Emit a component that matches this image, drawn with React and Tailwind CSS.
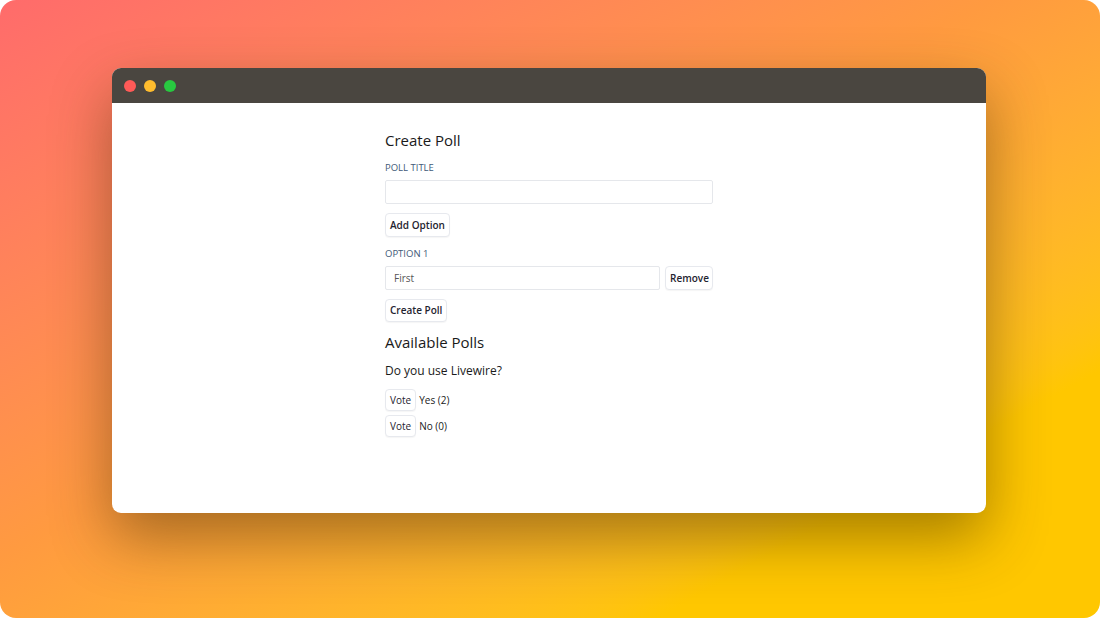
import { useState } from "react";

function Btn({ children, className = "", bold = true }) {
  return (
    <button
      className={`rounded-[4px] border border-[#e7e9ee] bg-white px-[4px] text-[10px] text-[#1f2430] shadow-[0_1px_1px_rgba(0,0,0,0.04)] ${
        bold ? "font-semibold" : "font-normal"
      } ${className}`}
    >
      {children}
    </button>
  );
}

export default function App() {
  const [title, setTitle] = useState("");
  const [option, setOption] = useState("First");

  return (
    <div className="h-[618px] w-[1100px] bg-white" style={{ fontFamily: '"Open Sans", "Noto Sans", sans-serif' }}>
      <div className="flex h-full w-full flex-col rounded-[16px] bg-gradient-to-br from-[#ff6b6b] via-[#ff9a40] via-45% to-[#ffc700] to-80% pl-[112px] pt-[68px]">
        <div className="flex h-[445px] w-[874px] flex-col overflow-hidden rounded-[9px] bg-white shadow-[0_25px_60px_rgba(60,40,0,0.45)]">
          <div className="flex h-[35px] items-center gap-[8px] bg-[#4a4640] pl-[12px]">
            <span className="h-[12px] w-[12px] rounded-full bg-[#ff5a57]" />
            <span className="h-[12px] w-[12px] rounded-full bg-[#ffbd2e]" />
            <span className="h-[12px] w-[12px] rounded-full bg-[#28c840]" />
          </div>
          <div className="flex flex-col pl-[273px] pt-[26px]">
            <div className="flex w-[328px] flex-col">
              <h2 className="text-[15px] leading-[22px] text-[#1a1a1a]">Create Poll</h2>
              <label className="mt-[11px] text-[9.5px] uppercase leading-[12px] text-[#3f5a78]">Poll Title</label>
              <input
                value={title}
                onChange={(e) => setTitle(e.target.value)}
                className="mt-[6px] h-[24px] w-full rounded-[2px] border border-[#e5e7eb] px-[8px] text-[10px] outline-none"
              />
              <div className="mt-[9px] flex">
                <Btn className="h-[24px]">Add Option</Btn>
              </div>
              <label className="mt-[11px] text-[9.5px] uppercase leading-[12px] text-[#3f5a78]">Option 1</label>
              <div className="mt-[6px] flex gap-[5px]">
                <input
                  value={option}
                  onChange={(e) => setOption(e.target.value)}
                  className="h-[24px] flex-1 rounded-[2px] border border-[#e5e7eb] px-[8px] text-[10px] text-[#555] outline-none"
                />
                <Btn className="h-[24px] w-[48px]">Remove</Btn>
              </div>
              <div className="mt-[9px] flex">
                <Btn className="h-[23px]">Create Poll</Btn>
              </div>
              <h2 className="mt-[9px] text-[15px] leading-[22px] text-[#1a1a1a]">Available Polls</h2>
              <p className="mt-[10px] text-[12px] leading-[16px] text-[#1a1a1a]">Do you use Livewire?</p>
              <div className="mt-[10px] flex items-center gap-[3px]">
                <Btn bold={false} className="h-[22px]">Vote</Btn>
                <span className="text-[10px] text-[#1a1a1a]">Yes (2)</span>
              </div>
              <div className="mt-[4px] flex items-center gap-[3px]">
                <Btn bold={false} className="h-[22px]">Vote</Btn>
                <span className="text-[10px] text-[#1a1a1a]">No (0)</span>
              </div>
            </div>
          </div>
        </div>
      </div>
    </div>
  );
}
